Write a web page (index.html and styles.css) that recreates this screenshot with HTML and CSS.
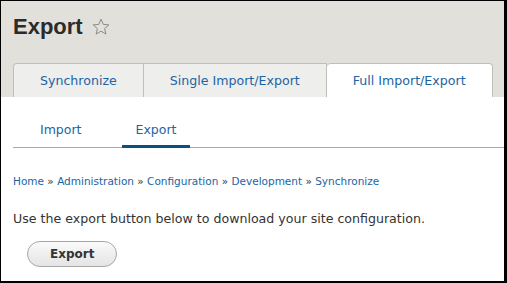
FILE: index.html
```html
<!DOCTYPE html>
<html lang="en">
<head>
    <meta charset="UTF-8">
    <title>Export</title>
    <link rel="stylesheet" href="styles.css">
</head>
<body>
    <div class="frame">
        <header class="page-header">
            <h1 class="page-title">Export
                <svg class="star" width="18" height="18" viewBox="0 0 18 18"><path d="M9 1.2l2.3 5.2 5.6.5-4.3 3.7 1.3 5.5L9 13.2l-4.9 2.9 1.3-5.5L1.1 6.9l5.6-.5z" fill="none" stroke="#8c8c86" stroke-width="1"/></svg>
            </h1>
            <ul class="tabs-primary">
                <li><a href="#">Synchronize</a></li>
                <li><a href="#">Single Import/Export</a></li>
                <li class="active"><a href="#">Full Import/Export</a></li>
            </ul>
        </header>
        <main class="content">
            <ul class="tabs-secondary">
                <li><a href="#">Import</a></li>
                <li class="active"><a href="#">Export</a></li>
            </ul>
            <nav class="breadcrumb">
                <a href="#">Home</a> » <a href="#">Administration</a> » <a href="#">Configuration</a> » <a href="#">Development</a> » <a href="#">Synchronize</a>
            </nav>
            <p class="intro">Use the export button below to download your site configuration.</p>
            <button type="button" class="button">Export</button>
        </main>
    </div>
</body>
</html>
```

FILE: styles.css
```css
body {
    margin: 0;
    font-family: 'DejaVu Sans', sans-serif;
    color: #333;
    background-color: white;
}
a {
    color: #1b64a4;
    text-decoration: none;
}
ul {
    list-style: none;
    margin: 0;
    padding: 0;
}
.frame {
    width: 507px;
    height: 283px;
    box-sizing: border-box;
    border-style: solid;
    border-color: black;
    border-width: 1px 3px 2px 1px;
    overflow: hidden;
}
.page-header {
    background-color: #e1e0da;
    padding: 0 12px;
}
.page-title {
    margin: 0;
    padding: 13px 0 23px;
    font-family: 'Liberation Sans', sans-serif;
    font-size: 22px;
    line-height: 26px;
    font-weight: bold;
    color: #2b2b2b;
    display: flex;
    align-items: center;
    gap: 9px;
}
.star {
    display: block;
}
.tabs-primary {
    display: flex;
    white-space: nowrap;
}
.tabs-primary li {
    flex-shrink: 0;
    border: 1px solid #bfbfba;
    border-bottom: none;
    border-left: none;
    background-color: #eeeeec;
}
.tabs-primary li:first-child {
    border-left: 1px solid #bfbfba;
    border-top-left-radius: 4px;
}
.tabs-primary li.active {
    background-color: white;
    border-top-left-radius: 4px;
    border-top-right-radius: 4px;
}
.tabs-primary a {
    display: block;
    padding: 9px 26px 8px;
    font-size: 12.6px;
    line-height: 16px;
}
.content {
    padding: 0 0 0 12px;
}
.tabs-secondary {
    display: flex;
    white-space: nowrap;
    border-bottom: 1px solid #a8a8a8;
}
.tabs-secondary li {
    margin: 0 13px -1px;
    border-bottom: 3px solid transparent;
}
.tabs-secondary li.active {
    border-bottom-color: #0b4f80;
}
.tabs-secondary a {
    display: block;
    padding: 25px 14px 7px;
    font-size: 12.5px;
    line-height: 16px;
}
.breadcrumb {
    margin-top: 25px;
    font-size: 10.5px;
    line-height: 16px;
    color: #333;
}
.intro {
    margin: 22px 0 0;
    font-size: 12.6px;
    line-height: 16px;
}
.button {
    margin: 14px 0 0 14px;
    height: 26px;
    padding: 0 22px;
    border: 1px solid #a6a6a6;
    border-radius: 20px;
    background: linear-gradient(to bottom, #fafafa, #e4e4e4);
    font-family: 'DejaVu Sans', sans-serif;
    font-size: 12px;
    font-weight: bold;
    color: #333;
}
```
